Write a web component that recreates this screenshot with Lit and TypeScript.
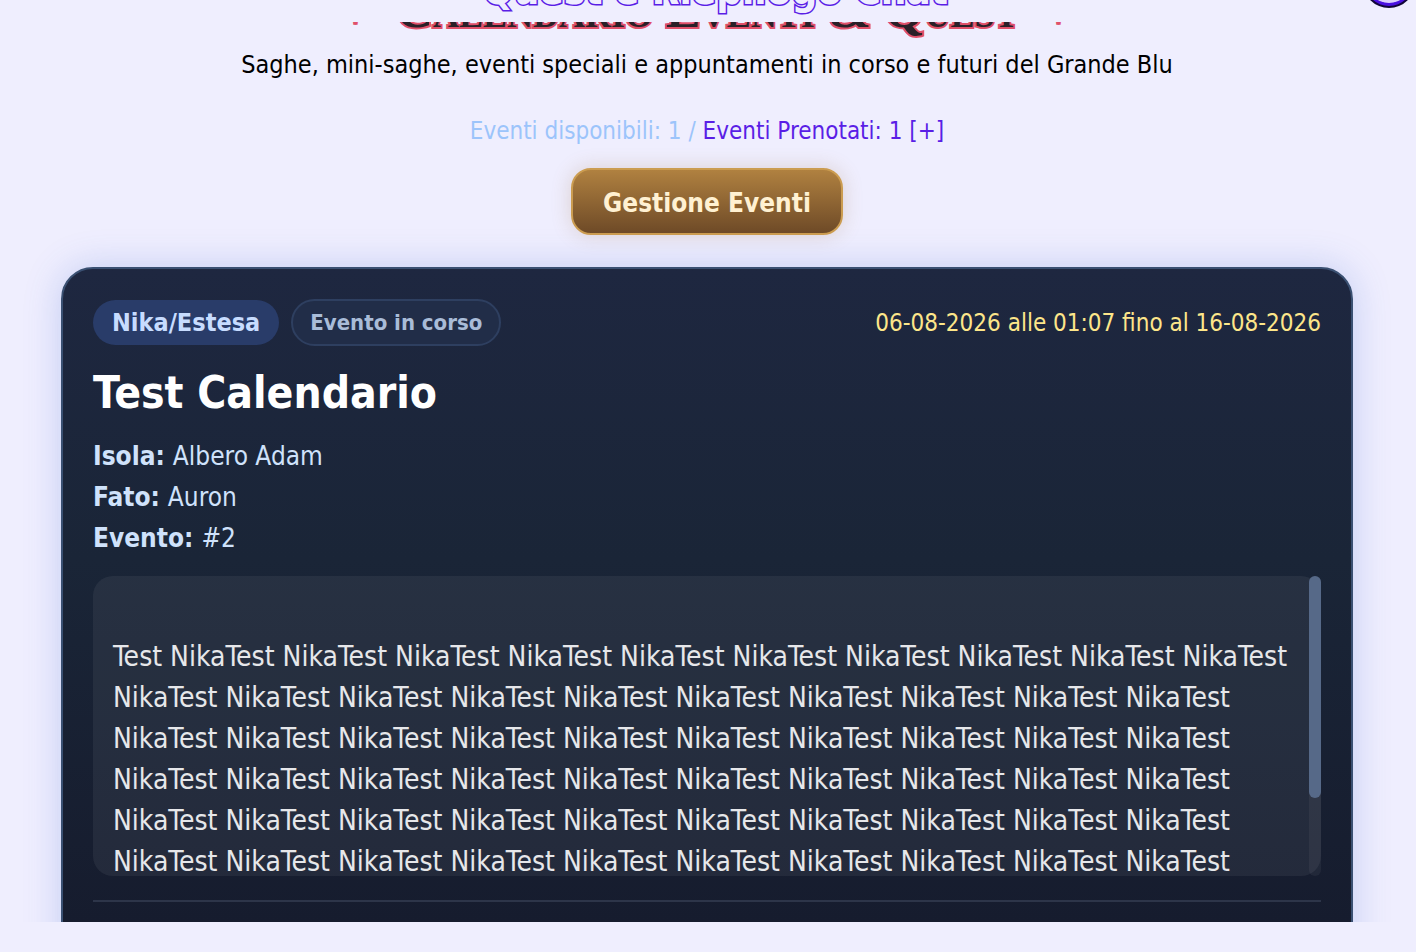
import { LitElement, html, css } from "lit";
import { customElement } from "lit/decorators.js";

const STORY =
  "\nTest " + Array.from({ length: 90 }, () => "NikaTest").join(" ");

@customElement("event-card")
export class EventCard extends LitElement {
  static styles = css`
    :host {
      display: block;
    }
    .card {
      box-sizing: border-box;
      min-height: 760px;
      padding: 30px;
      border: 2px solid #3a5072;
      border-radius: 32px;
      background: linear-gradient(180deg, #1e2740 0, #1a2537 290px, #161c2e 655px);
      box-shadow: 0 0 36px rgba(70, 110, 210, 0.26);
      color: #cfe2fb;
    }
    .top {
      display: flex;
      align-items: center;
      gap: 12px;
      height: 47px;
    }
    .pill {
      box-sizing: border-box;
      padding: 0 20px;
      border-radius: 24px;
      font-weight: 700;
    }
    .kind {
      height: 45px;
      padding: 0 19px;
      line-height: 46px;
      font-size: 25px;
      background: #293c69;
      color: #c7dcff;
    }
    .state {
      height: 47px;
      padding: 0 17px;
      border: 2px solid #2e3f60;
      line-height: 44px;
      font-size: 22px;
      background: #212d48;
      color: #a9bcd8;
    }
    .when {
      margin-left: auto;
      line-height: 30px;
      font-size: 24px;
      color: #fde68a;
    }
    .name {
      margin: 18px 0 14px;
      line-height: 58px;
      font-size: 44px;
      font-weight: 700;
      color: #fff;
    }
    .facts {
      margin: 0;
      font-size: 26px;
      line-height: 41px;
    }
    .fact {
      display: flex;
      gap: 8px;
    }
    .fact dt {
      font-weight: 700;
    }
    .fact dd {
      margin: 0;
    }
    .story {
      display: flex;
      height: 300px;
      margin-top: 17px;
      border-radius: 20px;
      background: rgba(255, 255, 255, 0.06);
    }
    .text {
      flex: 1;
      box-sizing: border-box;
      min-width: 0;
      height: 300px;
      padding: 19px 8px 0 20px;
      overflow: hidden;
      white-space: pre-wrap;
      font-size: 28px;
      line-height: 41px;
      color: #e6e7ea;
    }
    .track {
      width: 12px;
      border-radius: 6px;
      background: rgba(255, 255, 255, 0.05);
    }
    .thumb {
      height: 74%;
      border-radius: 6px;
      background: #566988;
    }
    .rule {
      height: 2px;
      margin: 24px 0 0;
      border: 0;
      background: #2d3549;
    }
  `;

  render() {
    return html`
      <article class="card">
        <div class="top">
          <span class="pill kind">Nika/Estesa</span>
          <span class="pill state">Evento in corso</span>
          <time class="when">06-08-2026 alle 01:07 fino al 16-08-2026</time>
        </div>
        <h2 class="name">Test Calendario</h2>
        <dl class="facts">
          <div class="fact"><dt>Isola:</dt><dd>Albero Adam</dd></div>
          <div class="fact"><dt>Fato:</dt><dd>Auron</dd></div>
          <div class="fact"><dt>Evento:</dt><dd>#2</dd></div>
        </dl>
        <div class="story">
          <div class="text">${STORY}</div>
          <div class="track"><div class="thumb"></div></div>
        </div>
        <hr class="rule" />
      </article>
    `;
  }
}

@customElement("app-root")
export class AppRoot extends LitElement {
  static styles = css`
    :host {
      display: flex;
      flex-direction: column;
      box-sizing: border-box;
      height: 100vh;
      padding-bottom: 30px;
      overflow: hidden;
      position: relative;
      background: #efeefe;
      font-family: "DejaVu Sans Condensed", "Noto Sans", sans-serif;
      color: #000;
    }
    .bar {
      display: flex;
      flex: none;
      box-sizing: border-box;
      align-items: flex-end;
      justify-content: center;
      height: 22px;
      padding: 0 0 12px 15px;
    }
    .heading {
      margin: 0;
      line-height: 40px;
      font-size: 40px;
      font-weight: 700;
      color: #efeefe;
      -webkit-text-stroke: 3px #5a1ee6;
      paint-order: stroke;
    }
    .close {
      position: absolute;
      top: -44px;
      right: 1px;
      width: 52px;
      height: 52px;
      padding: 0;
      border: 0;
      background: none;
    }
    .close svg {
      display: block;
    }
    .page {
      flex: 1;
      min-height: 0;
      overflow: hidden;
      padding: 0 63px 0 61px;
    }
    .intro {
      display: flex;
      flex-direction: column;
      align-items: center;
    }
    .banner {
      display: flex;
      align-items: flex-end;
      height: 10px;
    }
    .title {
      display: flex;
      gap: 21px;
      margin: 0;
      line-height: 44px;
      font-family: "Liberation Serif", serif;
      font-size: 52px;
      font-weight: 700;
      font-variant: small-caps;
      white-space: nowrap;
      color: #2a2028;
      -webkit-text-stroke: 4px #e0506a;
      paint-order: stroke;
    }
    .spark {
      font-size: 44px;
      color: #e0506a;
      -webkit-text-stroke-width: 3px;
    }
    .lead {
      margin: 16px 0 0;
      line-height: 34px;
      font-size: 25px;
    }
    .counts {
      margin: 34px 0 0;
      line-height: 30px;
      font-size: 24px;
      color: #9cc4fb;
    }
    .booked {
      color: #5a1ee6;
      text-decoration: none;
    }
    .manage {
      height: 67px;
      margin: 22px 0 32px;
      padding: 2px 30px 0;
      border: 2px solid #cb9c50;
      border-radius: 20px;
      background: linear-gradient(180deg, #b08140, #6e4a27);
      box-shadow: 0 0 20px rgba(150, 100, 40, 0.22);
      font-family: inherit;
      font-size: 26px;
      font-weight: 700;
      color: #fff1d2;
    }
  `;

  render() {
    return html`
      <header class="bar">
        <h1 class="heading">Quest e Riepilogo Chat</h1>
        <button class="close" aria-label="Chiudi">
          <svg width="52" height="52" viewBox="0 0 52 52">
            <circle cx="26" cy="26" r="26" fill="#120638" />
            <circle cx="26" cy="26" r="24" fill="#4a10e0" />
            <circle cx="26" cy="25" r="22" fill="#dcd2fc" />
          </svg>
        </button>
      </header>
      <main class="page">
        <section class="intro">
          <div class="banner">
            <h2 class="title">
              <span class="spark">✦</span>
              <span>Calendario Eventi &amp; Quest</span>
              <span class="spark">✦</span>
            </h2>
          </div>
          <p class="lead">
            Saghe, mini-saghe, eventi speciali e appuntamenti in corso e futuri del Grande Blu
          </p>
          <p class="counts">
            Eventi disponibili: 1 /
            <a class="booked" href="#prenotati">Eventi Prenotati: 1 [+]</a>
          </p>
          <button class="manage">Gestione Eventi</button>
        </section>
        <event-card></event-card>
      </main>
    `;
  }
}
